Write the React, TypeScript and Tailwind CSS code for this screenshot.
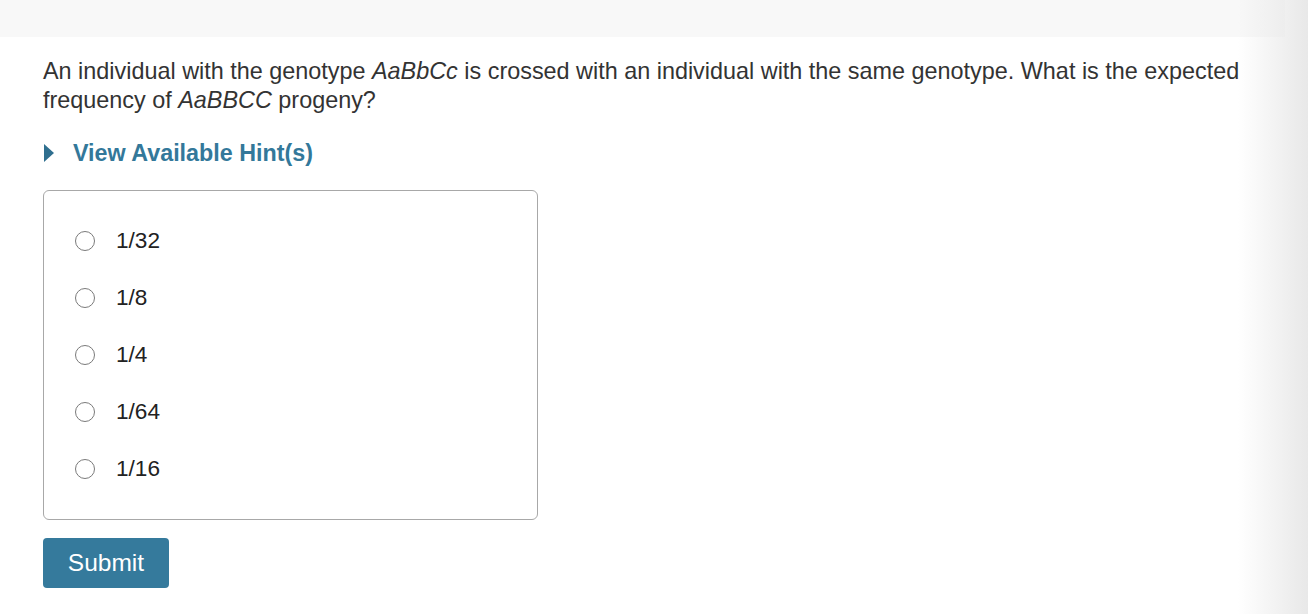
import React from "react";

const options = ["1/32", "1/8", "1/4", "1/64", "1/16"];

export default function App() {
  return (
    <div
      className="relative w-[1308px] h-[614px] bg-white overflow-hidden text-[#333]"
      style={{ fontFamily: '"Liberation Sans", Arial, sans-serif' }}
    >
      <div className="h-[37px] w-[1285px] bg-[#f8f8f8]" />
      <div className="absolute top-0 right-0 h-full w-[70px] bg-gradient-to-r from-transparent to-[#e8e8e8] pointer-events-none" />
      <div className="pl-[43px] pt-[20px]">
        <div className="w-[1215px] text-[23.4px] leading-[29px] text-[#333] whitespace-nowrap">
          <div>
            <span>An individual with the genotype </span>
            <i>AaBbCc</i>
            <span> is crossed with an individual with the same genotype. What is the expected</span>
          </div>
          <div>
            <span>frequency of </span>
            <i>AaBBCC</i>
            <span> progeny?</span>
          </div>
        </div>
        <div className="mt-[23px] flex items-center h-[30px]">
          <svg width="10" height="18" viewBox="0 0 10 18" className="ml-[1px]">
            <polygon points="0,0 10,9 0,18" fill="#2f6f8f" />
          </svg>
          <span className="ml-[19px] text-[23.3px] font-bold text-[#33789a]">View Available Hint(s)</span>
        </div>
        <div className="mt-[22px] w-[495px] h-[330px] border border-[#a8a8a8] rounded-[6px] pt-[22px] pl-[31px]">
          {options.map((o) => (
            <label key={o} className="flex items-center h-[56.8px]">
              <span className="w-[20px] h-[20px] rounded-full border-[1.5px] border-[#7a7a7a] bg-white" />
              <span className="ml-[21px] text-[22.6px] text-[#222]">{o}</span>
            </label>
          ))}
        </div>
        <button className="mt-[18px] w-[126px] h-[50px] bg-[#357a9c] rounded-[4px] text-white text-[24.5px]">
          Submit
        </button>
      </div>
    </div>
  );
}
